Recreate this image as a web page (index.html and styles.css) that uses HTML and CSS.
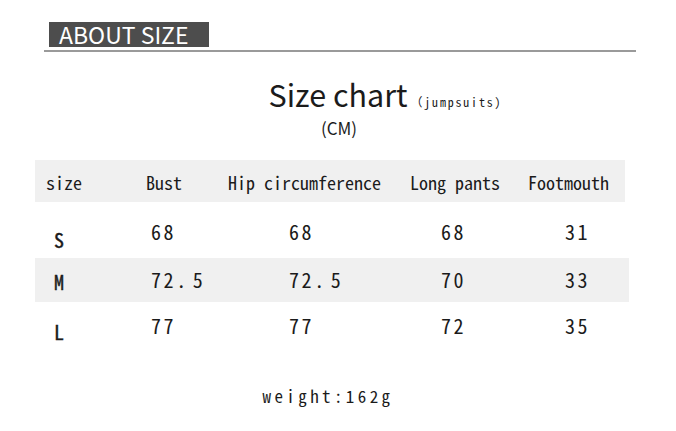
FILE: index.html
```html
<!DOCTYPE html>
<html>
<head>
<meta charset="utf-8">
<link rel="stylesheet" href="styles.css">
</head>
<body>
<div class="page">
  <div class="about">
    <div class="badge">ABOUT SIZE</div>
    <div class="rule"></div>
  </div>
  <div class="title">
    <span></span>
    <span class="big">Size chart</span>
    <span class="sub">（jumpsuits)</span>
  </div>
  <div class="unit">(CM)</div>
  <div class="table">
    <div class="row head">
      <div>size</div>
      <div>Bust</div>
      <div>Hip circumference</div>
      <div>Long pants</div>
      <div>Footmouth</div>
    </div>
    <div class="row data r-s">
      <div class="sz">S</div>
      <div class="v1">68</div>
      <div class="v2">68</div>
      <div class="v3">68</div>
      <div class="v4">31</div>
    </div>
    <div class="row data r-m shade">
      <div class="sz">M</div>
      <div class="v1">72.&#8202;5</div>
      <div class="v2">72.&#8202;5</div>
      <div class="v3">70</div>
      <div class="v4">33</div>
    </div>
    <div class="row data r-l">
      <div class="sz">L</div>
      <div class="v1">77</div>
      <div class="v2">77</div>
      <div class="v3">72</div>
      <div class="v4">35</div>
    </div>
  </div>
  <div class="weight">weight:162g</div>
</div>
</body>
</html>
```
FILE: styles.css
```css
html, body {
  margin: 0;
  padding: 0;
  background: #ffffff;
}
.page {
  width: 676px;
  height: 431px;
  color: #1b1b1b;
  font-family: "Noto Sans CJK SC", "Noto Sans", sans-serif;
}
.about {
  margin-left: 44px;
  width: 592px;
  padding-top: 22px;
}
.badge {
  margin-left: 5px;
  width: 150px;
  height: 25px;
  padding-left: 10px;
  background: #4d4d4d;
  color: #ffffff;
  font-size: 23px;
  line-height: 24px;
}
.rule {
  margin-top: 3px;
  height: 2px;
  background: #9a9a9a;
}
.title {
  display: grid;
  grid-template-columns: 1fr auto 1fr;
  align-items: baseline;
  margin-top: 25px;
}
.big {
  font-size: 30.5px;
  line-height: 34px;
}
.sub {
  margin-left: 3px;
  font-family: "Noto Sans Mono CJK SC", "DejaVu Sans Mono", monospace;
  font-size: 12px;
  letter-spacing: 1.8px;
}
.unit {
  text-align: center;
  font-size: 17px;
  line-height: 20px;
  margin-top: 7px;
  padding-left: 2px;
}
.table {
  margin-top: 22px;
  margin-left: 35px;
  width: 594px;
  font-family: "Noto Sans Mono CJK SC", "DejaVu Sans Mono", monospace;
}
.row {
  display: grid;
  grid-template-columns: 100px 82px 182px 118px 1fr;
  padding-left: 11px;
}
.head {
  height: 42px;
  align-items: center;
  background: #f0f0f0;
  font-size: 18px;
  width: 590px;
  padding-top: 1px;
  box-sizing: border-box;
}
.data {
  font-size: 20px;
  letter-spacing: 2.6px;
  line-height: 20px;
  align-items: start;
}
.shade {
  background: #f0f0f0;
}
.r-s { height: 56px; }
.r-m { height: 44px; }
.r-l { height: 50px; }
.r-s > div { padding-top: 20px; }
.r-m > div { padding-top: 12px; }
.r-l > div { padding-top: 14px; }
.r-s > .sz { padding-top: 28px; }
.r-m > .sz { padding-top: 14px; }
.r-l > .sz { padding-top: 20px; }
.sz {
  padding-left: 8px;
  letter-spacing: 0;
  font-weight: 400;
  -webkit-text-stroke: 0.4px #1b1b1b;
}
.v1 { padding-left: 5px; }
.v2 { padding-left: 61px; }
.v3 { padding-left: 31px; }
.v4 { padding-left: 37px; }
.weight {
  margin-top: 32px;
  text-align: center;
  padding-right: 20px;
  font-family: "Noto Sans Mono CJK SC", "DejaVu Sans Mono", monospace;
  font-size: 17px;
  letter-spacing: 3.4px;
  line-height: 24px;
}
```
